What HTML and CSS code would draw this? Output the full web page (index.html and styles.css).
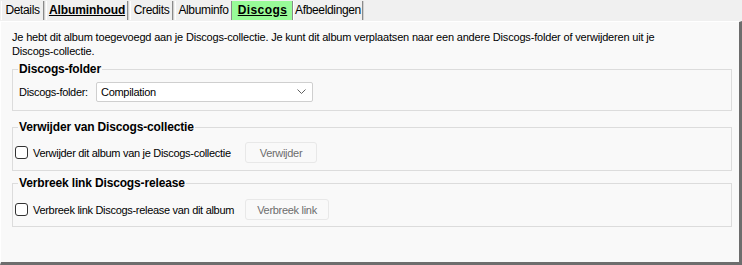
FILE: index.html
```html
<!DOCTYPE html>
<html lang="nl">
<head>
    <meta charset="UTF-8">
    <title>Discogs</title>
    <link rel="stylesheet" href="styles.css">
</head>
<body>
    <div class="tabs">
        <div class="tab tab-details">Details</div>
        <div class="tab tab-bold tab-content">Albuminhoud</div>
        <div class="tab tab-credits">Credits</div>
        <div class="tab tab-info">Albuminfo</div>
        <div class="tab tab-bold tab-active">Discogs</div>
        <div class="tab tab-images">Afbeeldingen</div>
    </div>
    <div class="panel">
        <p class="intro">Je hebt dit album toegevoegd aan je Discogs-collectie. Je kunt dit album verplaatsen naar een andere Discogs-folder of verwijderen uit je Discogs-collectie.</p>

        <fieldset class="group group-folder">
            <legend>Discogs-folder</legend>
            <div class="row">
                <span class="label">Discogs-folder:</span>
                <div class="combo">
                    <span>Compilation</span>
                    <svg width="9" height="6" viewBox="0 0 9 6"><path d="M0.5 0.5 L4.5 4.5 L8.5 0.5" fill="none" stroke="#606060" stroke-width="1"/></svg>
                </div>
            </div>
        </fieldset>

        <fieldset class="group group-remove">
            <legend>Verwijder van Discogs-collectie</legend>
            <div class="row">
                <span class="check"></span>
                <span class="check-label">Verwijder dit album van je Discogs-collectie</span>
                <button class="btn">Verwijder</button>
            </div>
        </fieldset>

        <fieldset class="group group-unlink">
            <legend>Verbreek link Discogs-release</legend>
            <div class="row">
                <span class="check"></span>
                <span class="check-label">Verbreek link Discogs-release van dit album</span>
                <button class="btn btn-wide">Verbreek link</button>
            </div>
        </fieldset>
    </div>
</body>
</html>
```

FILE: styles.css
```css
body {
    margin: 0;
    width: 742px;
    height: 265px;
    background-color: #f0f0f0;
    font-family: "Liberation Sans", Arial, sans-serif;
    font-size: 11px;
    letter-spacing: -0.3px;
    color: #000;
    overflow: hidden;
}

.tabs {
    display: flex;
    height: 21px;
    padding: 1px 0 0 1px;
    box-sizing: border-box;
}

.tab {
    height: 19px;
    line-height: 19px;
    box-sizing: border-box;
    text-align: center;
    border-left: 1px solid #fff;
    border-right: 1px solid #8a8a8a;
    box-shadow: 1px 0 0 #d0d0d0;
    margin-right: 2px;
    font-size: 12px;
    letter-spacing: -0.35px;
}

.tab-details {
    width: 43px;
}

.tab-content {
    width: 82px;
}

.tab-credits {
    width: 43px;
}

.tab-info {
    width: 57px;
    margin-right: 0;
}

.tab-images {
    width: 70px;
}

.tab-bold {
    font-weight: bold;
    text-decoration: underline;
    letter-spacing: -0.1px;
}

.tab-active {
    width: 61px;
    margin-right: 0;
    background-color: #98fb98;
    border-left-color: #98fb98;
    letter-spacing: 0.4px;
}

.panel {
    height: 244px;
    box-sizing: border-box;
    background-color: #f9f9f9;
    border-top: 1px solid #fff;
    border-left: 1px solid #fff;
    border-right: 3px solid #6d6d6d;
    border-bottom: 3px solid #6d6d6d;
    padding: 8px 7px 0 11px;
}

.intro {
    margin: 0 0 4px 0;
    line-height: 14px;
    width: 650px;
    letter-spacing: -0.18px;
}

.group {
    margin: 0;
    border: 1px solid #dcdcdc;
    padding: 0;
}

.group legend {
    font-weight: bold;
    font-size: 12px;
    letter-spacing: -0.15px;
    line-height: 15px;
    padding: 0 1px;
    margin-left: 5px;
}

.row {
    display: flex;
    align-items: center;
}

.group-folder .row {
    padding: 5px 0 8px 6px;
}

.group-remove {
    margin-top: 9px;
}

.group-remove .row {
    padding: 7px 0 7px 2px;
}

.group-unlink {
    margin-top: 5px;
}

.group-unlink .row {
    padding: 8px 0 6px 2px;
}

.label {
    width: 77px;
}

.combo {
    width: 217px;
    height: 20px;
    background-color: #fff;
    border: 1px solid #cfcfcf;
    border-radius: 2px;
    display: flex;
    align-items: center;
    justify-content: space-between;
    padding: 0 6px 0 4px;
    box-sizing: border-box;
}

.check {
    width: 11px;
    height: 11px;
    border: 1px solid #333;
    border-radius: 3px;
    background-color: #fff;
    margin-right: 5px;
}

.check-label {
    width: 212px;
    white-space: nowrap;
}

.btn {
    height: 21px;
    width: 72px;
    font-family: inherit;
    font-size: 11px;
    letter-spacing: -0.3px;
    color: #6d6d6d;
    background-color: #f9f9f9;
    border: 1px solid #e8e8e8;
    border-radius: 3px;
    padding: 0;
}

.btn-wide {
    width: 84px;
}
```
